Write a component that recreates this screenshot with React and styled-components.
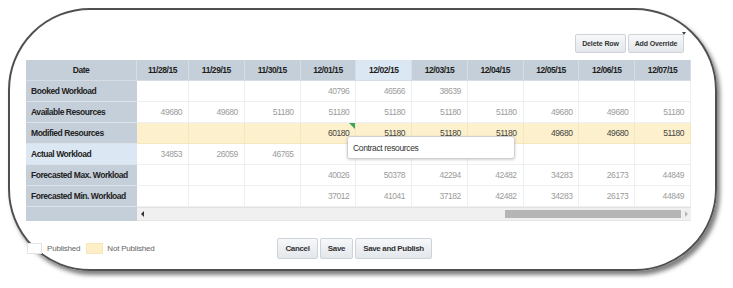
import React from 'react';
import styled, { createGlobalStyle } from 'styled-components';

const Global = createGlobalStyle`
  html, body { margin: 0; padding: 0; background: #fff; }
  body {
    width: 733px;
    height: 288px;
    overflow: hidden;
    font-family: "Liberation Sans", Arial, sans-serif;
  }
`;

const Frame = styled.div`
  box-sizing: border-box;
  margin: 8px 0 0 8px;
  width: 709px;
  height: 263px;
  border: 2px solid #505050;
  border-radius: 82px;
  box-shadow: 3px 4px 4px rgba(0, 0, 0, 0.5);
  padding: 24px 24px 0 16px;
  display: flex;
  flex-direction: column;
`;

const Toolbar = styled.div`
  position: relative;
  display: flex;
  justify-content: flex-end;
  gap: 2px;
  margin-right: 7px;
`;

const Caret = styled.span`
  position: absolute;
  right: -2px;
  top: -2px;
  width: 0;
  height: 0;
  border-left: 2px solid transparent;
  border-right: 2px solid transparent;
  border-top: 3px solid #444;
`;

const Button = styled.button`
  box-sizing: border-box;
  width: ${(p) => p.$w}px;
  height: ${(p) => p.$h}px;
  padding: 0;
  border: 1px solid #cdd3d9;
  border-radius: 2px;
  background: linear-gradient(#f6f8fa, #e3e7eb);
  color: #333;
  font-family: "Liberation Sans", Arial, sans-serif;
  font-weight: bold;
  font-size: ${(p) => p.$fs}px;
  letter-spacing: ${(p) => p.$ls}px;
  white-space: nowrap;
  display: flex;
  align-items: center;
  justify-content: center;
`;

const TableWrap = styled.div`
  position: relative;
  margin-top: 7px;
  width: 665px;
`;

const Grid = styled.div`
  display: grid;
  grid-template-columns: 111px 52px repeat(9, 1fr);
  grid-auto-rows: 21px;
  font-size: 8.5px;
  letter-spacing: -0.45px;
`;

const HeadCell = styled.div`
  box-sizing: border-box;
  display: flex;
  align-items: center;
  justify-content: center;
  background: ${(p) => (p.$active ? '#dbe7f3' : '#c5cfd9')};
  border-right: 1px solid #d6dde4;
  border-bottom: 1px solid #d6dde4;
  font-weight: bold;
  color: #1e1e1e;
`;

const LabelCell = styled.div`
  box-sizing: border-box;
  display: flex;
  align-items: center;
  padding-left: 5px;
  background: ${(p) => (p.$active ? '#dbe7f3' : '#c5cfd9')};
  border-bottom: 1px solid #dce2e8;
  font-weight: bold;
  color: #222;
  white-space: nowrap;
`;

const DataCell = styled.div`
  position: relative;
  box-sizing: border-box;
  display: flex;
  align-items: center;
  justify-content: flex-end;
  padding-right: 6px;
  background: ${(p) => (p.$modified ? '#fdf0cc' : '#fff')};
  border-right: 1px solid ${(p) => (p.$modified ? '#f6e6bd' : '#edf0f2')};
  border-bottom: 1px solid ${(p) => (p.$modified ? '#f6e6bd' : '#edf0f2')};
  color: ${(p) => (p.$modified ? '#444' : '#9c9c9c')};
`;

const Flag = styled.span`
  position: absolute;
  top: 0;
  right: 0;
  width: 0;
  height: 0;
  border-top: 6px solid #3aa85a;
  border-left: 6px solid transparent;
`;

const ScrollLabel = styled.div`
  background: #c5cfd9;
  height: 14px;
`;

const ScrollTrack = styled.div`
  grid-column: 2 / -1;
  box-sizing: border-box;
  height: 14px;
  background: #f0f0f0;
  border-top: 1px solid #e2e2e2;
  border-bottom: 1px solid #e6e6e6;
  display: flex;
  align-items: center;
`;

const Arrow = styled.span`
  width: 10px;
  height: 12px;
  display: flex;
  align-items: center;
  justify-content: center;
  &::before {
    content: '';
    width: 0;
    height: 0;
    border-top: 3px solid transparent;
    border-bottom: 3px solid transparent;
    ${(p) =>
      p.$dir === 'left'
        ? 'border-right: 3px solid #333;'
        : 'border-left: 3px solid #b8b8b8;'}
  }
`;

const Rail = styled.div`
  flex: 1;
  display: flex;
  justify-content: flex-end;
  align-items: center;
  height: 100%;
`;

const Thumb = styled.div`
  width: 176px;
  height: 8px;
  background: #b5b5b5;
`;

const Tooltip = styled.div`
  position: absolute;
  left: 321px;
  top: 76px;
  box-sizing: border-box;
  width: 168px;
  height: 23px;
  background: #fff;
  border: 1px solid #cfcfcf;
  border-radius: 3px;
  box-shadow: 0 1px 3px rgba(0, 0, 0, 0.18);
  display: flex;
  align-items: center;
  padding-left: 5px;
  font-size: 8.5px;
  letter-spacing: -0.35px;
  color: #333;
`;

const Footer = styled.div`
  display: flex;
  align-items: center;
  margin-top: 10px;
  height: 21px;
`;

const Legend = styled.div`
  width: 251px;
  display: flex;
  align-items: center;
  font-size: 8px;
  letter-spacing: -0.2px;
  color: #666;
`;

const Swatch = styled.span`
  box-sizing: border-box;
  width: ${(p) => p.$w}px;
  height: 11px;
  margin-left: ${(p) => p.$ml}px;
  margin-right: ${(p) => p.$mr}px;
  background: ${(p) => p.$bg};
  border: 1px solid ${(p) => p.$bd};
`;

const Actions = styled.div`
  display: flex;
  gap: 2px;
`;

const dates = ['11/28/15', '11/29/15', '11/30/15', '12/01/15', '12/02/15', '12/03/15', '12/04/15', '12/05/15', '12/06/15', '12/07/15'];

const rows = [
  { label: 'Booked Workload', values: ['', '', '', 40796, 46566, 38639, '', '', '', ''] },
  { label: 'Available Resources', values: [49680, 49680, 51180, 51180, 51180, 51180, 51180, 49680, 49680, 51180] },
  { label: 'Modified Resources', modified: true, values: ['', '', '', 60180, 51180, 51180, 51180, 49680, 49680, 51180], flag: 3 },
  { label: 'Actual Workload', active: true, values: [34853, 26059, 46765, '', '', '', '', '', '', ''] },
  { label: 'Forecasted Max. Workload', values: ['', '', '', 40026, 50378, 42294, 42482, 34283, 26173, 44849] },
  { label: 'Forecasted Min. Workload', values: ['', '', '', 37012, 41041, 37182, 42482, 34283, 26173, 44849] },
];

export default function App() {
  return (
    <>
      <Global />
      <Frame>
        <Toolbar>
          <Button $w={51} $h={19} $fs={7} $ls={-0.1}>Delete Row</Button>
          <Button $w={56} $h={19} $fs={7} $ls={-0.15}>Add Override</Button>
          <Caret />
        </Toolbar>
        <TableWrap>
          <Grid>
            <HeadCell>Date</HeadCell>
            {dates.map((d) => (
              <HeadCell key={d} $active={d === '12/02/15'}>{d}</HeadCell>
            ))}
            {rows.map((r) => (
              <React.Fragment key={r.label}>
                <LabelCell $active={r.active}>{r.label}</LabelCell>
                {r.values.map((v, i) => (
                  <DataCell key={i} $modified={r.modified}>
                    {v}
                    {r.flag === i && <Flag />}
                  </DataCell>
                ))}
              </React.Fragment>
            ))}
            <ScrollLabel />
            <ScrollTrack>
              <Arrow $dir="left" />
              <Rail>
                <Thumb />
              </Rail>
              <Arrow $dir="right" />
            </ScrollTrack>
          </Grid>
          <Tooltip>Contract resources</Tooltip>
        </TableWrap>
        <Footer>
          <Legend>
            <Swatch $w={15} $ml={1} $mr={5} $bg="#fff" $bd="#e4e4e4" />
            Published
            <Swatch $w={17} $ml={6} $mr={4} $bg="#fdefc8" $bd="#f7e6bb" />
            Not Published
          </Legend>
          <Actions>
            <Button $w={41} $h={21} $fs={8} $ls={-0.35}>Cancel</Button>
            <Button $w={33} $h={21} $fs={8} $ls={-0.35}>Save</Button>
            <Button $w={77} $h={21} $fs={8} $ls={-0.35}>Save and Publish</Button>
          </Actions>
        </Footer>
      </Frame>
    </>
  );
}
